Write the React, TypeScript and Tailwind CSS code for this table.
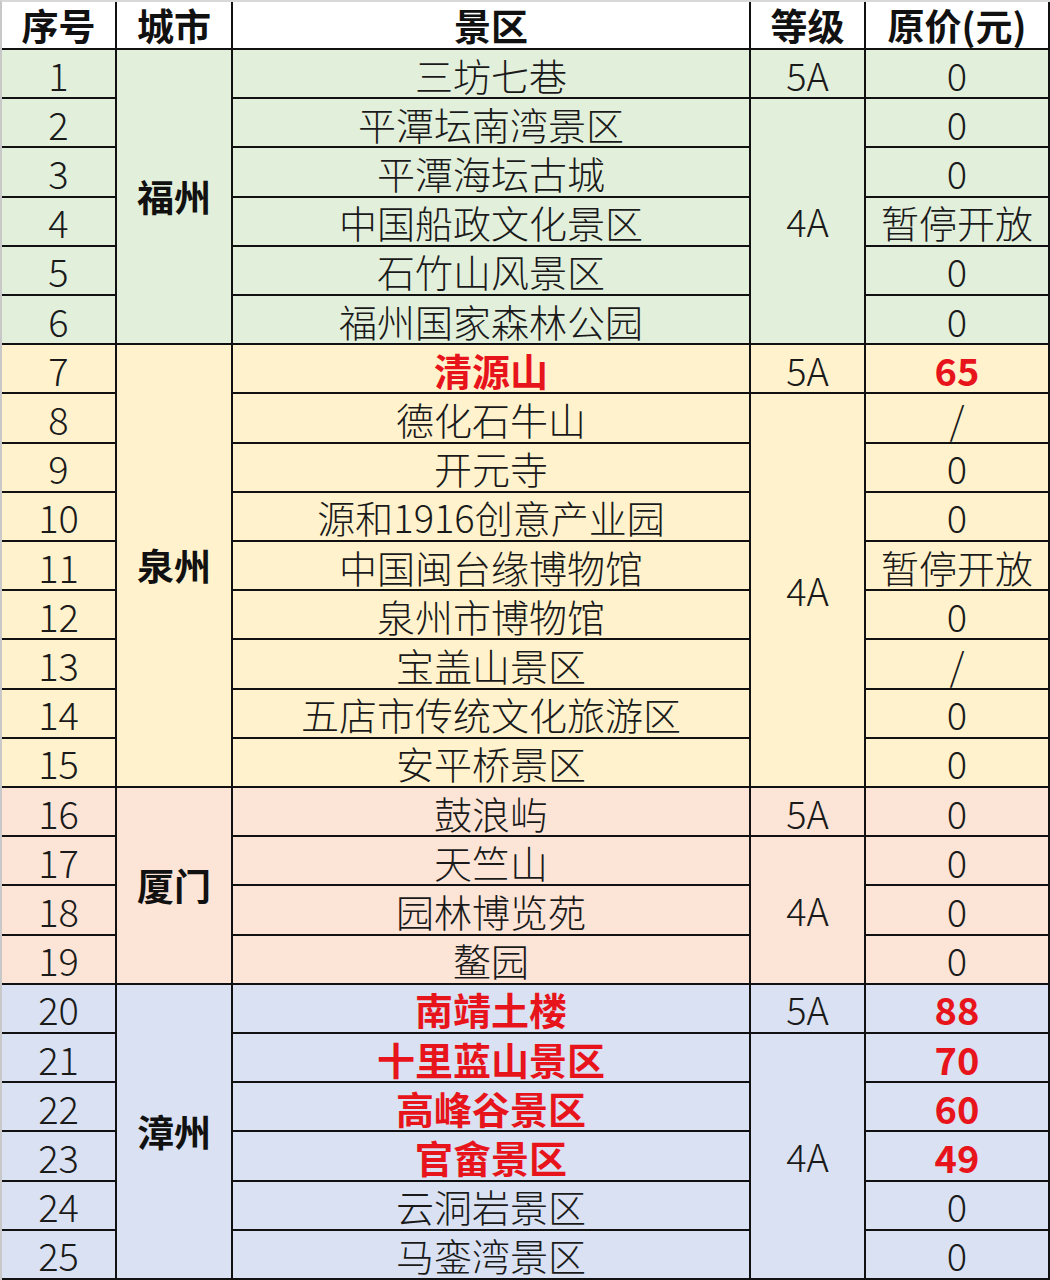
import React from "react";

const G = "bg-[#e2efda]";
const Y = "bg-[#fff2cc]";
const P = "bg-[#fce4d6]";
const B = "bg-[#d9e1f2]";

type Row = { n: number; name: string; price: string; red?: boolean };

const rows: Row[] = [
  { n: 1, name: "三坊七巷", price: "0" },
  { n: 2, name: "平潭坛南湾景区", price: "0" },
  { n: 3, name: "平潭海坛古城", price: "0" },
  { n: 4, name: "中国船政文化景区", price: "暂停开放" },
  { n: 5, name: "石竹山风景区", price: "0" },
  { n: 6, name: "福州国家森林公园", price: "0" },
  { n: 7, name: "清源山", price: "65", red: true },
  { n: 8, name: "德化石牛山", price: "/" },
  { n: 9, name: "开元寺", price: "0" },
  { n: 10, name: "源和1916创意产业园", price: "0" },
  { n: 11, name: "中国闽台缘博物馆", price: "暂停开放" },
  { n: 12, name: "泉州市博物馆", price: "0" },
  { n: 13, name: "宝盖山景区", price: "/" },
  { n: 14, name: "五店市传统文化旅游区", price: "0" },
  { n: 15, name: "安平桥景区", price: "0" },
  { n: 16, name: "鼓浪屿", price: "0" },
  { n: 17, name: "天竺山", price: "0" },
  { n: 18, name: "园林博览苑", price: "0" },
  { n: 19, name: "鳌园", price: "0" },
  { n: 20, name: "南靖土楼", price: "88", red: true },
  { n: 21, name: "十里蓝山景区", price: "70", red: true },
  { n: 22, name: "高峰谷景区", price: "60", red: true },
  { n: 23, name: "官畲景区", price: "49", red: true },
  { n: 24, name: "云洞岩景区", price: "0" },
  { n: 25, name: "马銮湾景区", price: "0" },
];

function bgFor(n: number) {
  if (n <= 6) return G;
  if (n <= 15) return Y;
  if (n <= 19) return P;
  return B;
}

const cityCls = "flex items-center justify-center font-bold text-[37px] text-[#111]";

const cityCells: Record<number, React.ReactNode> = {
  1: <div className={`row-span-6 ${G} ${cityCls}`}>福州</div>,
  7: <div className={`row-span-9 ${Y} ${cityCls}`}>泉州</div>,
  16: <div className={`row-span-4 ${P} ${cityCls}`}>厦门</div>,
  20: <div className={`row-span-6 ${B} ${cityCls}`}>漳州</div>,
};

const gradeCells: Record<number, React.ReactNode> = {
  1: <div className={`${G} flex items-center justify-center pt-[2px]`}>5A</div>,
  2: <div className={`row-span-5 ${G} flex items-center justify-center`}>4A</div>,
  7: <div className={`${Y} flex items-center justify-center pt-[2px]`}>5A</div>,
  8: <div className={`row-span-8 ${Y} flex items-center justify-center`}>4A</div>,
  16: <div className={`${P} flex items-center justify-center pt-[2px]`}>5A</div>,
  17: <div className={`row-span-3 ${P} flex items-center justify-center`}>4A</div>,
  20: <div className={`${B} flex items-center justify-center pt-[2px]`}>5A</div>,
  21: <div className={`row-span-5 ${B} flex items-center justify-center`}>4A</div>,
};

const headCls = "bg-white flex items-center justify-center font-bold text-[37px] text-[#111]";

export default function App() {
  return (
    <div
      className="w-[1050px] h-[1280px] bg-white border-l-2 border-t-2 border-l-[#c8c8c8] border-t-[#d8d8d8] overflow-hidden"
      style={{ fontFamily: '"Noto Sans CJK SC", "Noto Sans", sans-serif' }}
    >
      <div className="grid h-full grid-cols-[113px_114px_516px_113px_182px] grid-rows-[46px_repeat(25,minmax(0,1fr))] gap-[2px] bg-[#111] pr-[2px] pb-[2px] text-[38px] leading-none text-[#1a1a1a] font-light">
        <div className={headCls}>序号</div>
        <div className={headCls}>城市</div>
        <div className={headCls}>景区</div>
        <div className={headCls}>等级</div>
        <div className={headCls}>原价(元)</div>
        {rows.map((r) => {
          const bg = bgFor(r.n);
          return (
            <React.Fragment key={r.n}>
              <div className={`${bg} flex items-center justify-center pt-[2px]`}>{r.n}</div>
              {cityCells[r.n]}
              <div
                className={`${bg} flex items-center justify-center pt-[2px] ${r.red ? "text-[#e8141c] font-bold" : ""}`}
              >
                {r.name}
              </div>
              {gradeCells[r.n]}
              <div
                className={`${bg} flex items-center justify-center pt-[2px] ${r.red ? "text-[#e8141c] font-bold" : ""}`}
              >
                {r.price}
              </div>
            </React.Fragment>
          );
        })}
      </div>
    </div>
  );
}
